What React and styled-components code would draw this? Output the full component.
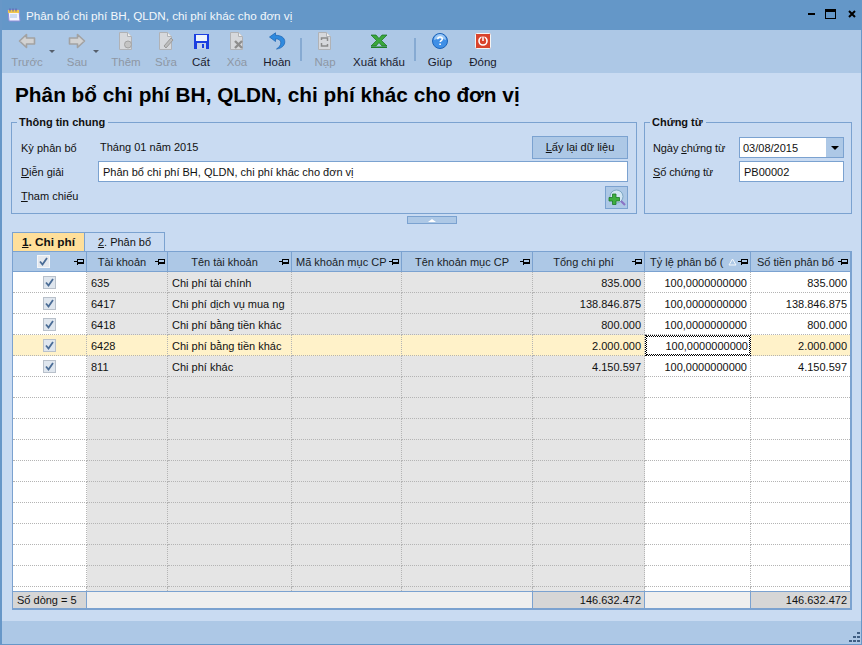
import React from 'react'
import styled, { createGlobalStyle } from 'styled-components'

const FONT = '"Liberation Sans", Arial, sans-serif'

const GlobalStyle = createGlobalStyle`
  html, body {
    margin: 0;
    padding: 0;
    background: #c9dbf2;
  }
  * { box-sizing: border-box; }
`

const PinIcon = () =>
  <PinSvg viewBox="0 0 10 9" width="10" height="9">
    <path d="M0 4.500H3M3.500 1.500V7.500M3.500 2.500H9.500V6.500H3.500M3.500 5.500H9.500" fill="none" stroke="#000" strokeWidth="1" />
  </PinSvg>

const PinSvg = styled.svg`
  flex: none;
  shape-rendering: crispEdges;
`

const BackIcon = () =>
  <svg viewBox="0 0 18 18" width="18" height="18">
    <path d="M8.500 2.500 1.500 9l7 6.500V12h8V6h-8z" fill="#d2d2d2" stroke="#a2a2a2" strokeWidth="1.600" strokeLinejoin="round" />
  </svg>

const ForwardIcon = () =>
  <svg viewBox="0 0 18 18" width="18" height="18">
    <path d="M9.500 2.500l7 6.500-7 6.500V12h-8V6h8z" fill="#d2d2d2" stroke="#a2a2a2" strokeWidth="1.600" strokeLinejoin="round" />
  </svg>

const PageIcon = ({ children }) =>
  <svg viewBox="0 0 18 18" width="18" height="18">
    <path d="M2.500 .5h8l4 4v13h-12z" fill="#d6d8dc" stroke="#b0b2b6" />
    <path d="M10.500 .5v4h4" fill="#eeeeee" stroke="#b0b2b6" />
    {children}
  </svg>

const SaveIcon = () =>
  <svg viewBox="0 0 15 15" width="15" height="15">
    <path d="M0 0h15v15H0z" fill="#1c3fe0" />
    <path d="M2 1h11v6H2z" fill="#eef4fc" />
    <path d="M3 9h9v6H3z" fill="#c4d2e8" />
    <path d="M8 10h2v4H8z" fill="#1c3fe0" />
  </svg>

const UndoIcon = () =>
  <svg viewBox="0 0 18 18" width="18" height="18">
    <path d="M7.500 .8 1.500 5l6 4.500V6.800c3.400 0 5.300 1.500 5.300 4 0 2.300-1.600 4.500-4.300 6.200 5.300-.6 8.300-3.700 8.300-7.200 0-4.200-3.800-6.500-9.300-6.500z" fill="#2f8ade" stroke="#1a62b0" strokeWidth=".7" strokeLinejoin="round" />
  </svg>

const ExcelIcon = () =>
  <svg viewBox="0 0 18 15" width="18" height="15">
    <path d="M1 1h5l3 3.500L12 1h5l-5.500 5.500L17 12h-5L9 8.500 6 12H1l5.500-5.500z" fill="#3aa83c" stroke="#17701f" strokeWidth=".7" />
    <path d="M1 12.500h16V14H1z" fill="#1d7f28" />
  </svg>

const HelpIcon = () =>
  <svg viewBox="0 0 16 16" width="16" height="16">
    <circle cx="8" cy="8" r="7.500" fill="#3f8fe6" stroke="#1c63b8" />
    <path d="M2 7a6 6 0 0 1 12 0c-3.800-1.800-8.200-1.800-12 0z" fill="#9cc8f5" />
    <path d="M5.800 6.200c0-1.400.9-2.100 2.300-2.100s2.200.7 2.200 1.900c0 1.600-2.100 1.600-2.100 3.100" fill="none" stroke="#fff" strokeWidth="1.500" />
    <path d="M7.300 10.500h1.600v1.600H7.300z" fill="#fff" />
  </svg>

const PowerIcon = () =>
  <svg viewBox="0 0 16 16" width="16" height="16">
    <rect x=".5" y=".5" width="15" height="15" rx="1" fill="#d9432c" stroke="#f4f4f4" />
    <circle cx="8" cy="8" r="4" fill="none" stroke="#fff" strokeWidth="1.600" />
    <path d="M8 3v5" stroke="#d9432c" strokeWidth="3" />
    <path d="M8 3.500v4.500" stroke="#fff" strokeWidth="1.500" />
  </svg>

const AppLogo = () =>
  <svg viewBox="0 0 16 16" width="16" height="16">
    <path d="M2 3h11l1 11H3z" fill="#f4f4ff" stroke="#8d8dd8" />
    <path d="M2 3h11v3H2z" fill="#f2c84c" />
    <path d="M4 1.500v3M7 1.500v3M10 1.500v3" stroke="#5a5aa8" />
    <path d="M4 8h7M4 10h7" stroke="#a8c4e8" />
  </svg>

const SearchAddIcon = () =>
  <svg viewBox="0 0 18 18" width="18" height="18">
    <circle cx="8.500" cy="7.500" r="6.500" fill="#d2e6f4" stroke="#7fa8c4" />
    <path d="M13 12l4 4" stroke="#8a72c4" strokeWidth="2.200" />
    <path d="M4.500 5h3.500v3.500h3.500V12H8v3.500H4.500V12H1V8.500h3.500z" fill="#3fae3f" stroke="#1c7a2a" strokeWidth=".8" />
  </svg>

const SortIcon = () =>
  <SortSvg viewBox="0 0 9 8" width="9" height="8">
    <path d="M4.500 1 8 7H1z" fill="none" stroke="#f4f8fc" />
  </SortSvg>

const SortSvg = styled.svg`
  flex: none;
  margin-right: 1px;
`

const tools = [
  { label: 'Trước', icon: <BackIcon />, width: 34, off: true, gap: 16, caret: -11 },
  { label: 'Sau', icon: <ForwardIcon />, width: 34, off: true, gap: 15, caret: -5 },
  { label: 'Thêm', icon: <PageIcon><circle cx="11" cy="12.500" r="3.500" fill="#c4c4c4" stroke="#a2a2a2" /></PageIcon>, width: 34, off: true, gap: 6 },
  { label: 'Sửa', icon: <PageIcon><path d="M7 14l7-8 2 2-7 8z" fill="#bcbcbc" stroke="#9a9a9a" /></PageIcon>, width: 34, off: true, gap: 1 },
  { label: 'Cất', icon: <SaveIcon />, width: 34, gap: 2 },
  { label: 'Xóa', icon: <PageIcon><path d="M7 9l7 7M14 9l-7 7" stroke="#8e8e8e" strokeWidth="2.400" /></PageIcon>, width: 34, off: true, gap: 6 },
  { label: 'Hoàn', icon: <UndoIcon />, width: 34, gap: 0, sep: [6, 6] },
  { label: 'Nạp', icon: <PageIcon><path d="M5.500 8V6h6v3M11.500 12v2h-6v-3" fill="none" stroke="#8a8a8a" strokeWidth="1.500" /></PageIcon>, width: 34, off: true, gap: 6 },
  { label: 'Xuất khẩu', icon: <ExcelIcon />, width: 62, gap: 0, sep: [4, 7] },
  { label: 'Giúp', icon: <HelpIcon />, width: 34, gap: 9 },
  { label: 'Đóng', icon: <PowerIcon />, width: 34, gap: 0 },
]

const Underlined = styled.span`
  text-decoration: underline;
`

const columns = [
  { key: 'check', title: '', pad: 0 },
  { key: 'account', title: 'Tài khoản', pad: 2 },
  { key: 'name', title: 'Tên tài khoản', pad: 2 },
  { key: 'itemCode', title: 'Mã khoản mục CP', pad: 4, left: true },
  { key: 'itemName', title: 'Tên khoản mục CP', pad: 2 },
  { key: 'total', title: 'Tổng chi phí', pad: 2 },
  { key: 'rate', title: 'Tỷ lệ phân bổ (', pad: 5, left: true, sorted: true },
  { key: 'amount', title: 'Số tiền phân bổ', pad: 6, left: true },
]

const rows = [
  { account: '635', name: 'Chi phí tài chính', total: '835.000', rate: '100,0000000000', amount: '835.000' },
  { account: '6417', name: 'Chi phí dịch vụ mua ng', total: '138.846.875', rate: '100,0000000000', amount: '138.846.875' },
  { account: '6418', name: 'Chi phí bằng tiền khác', total: '800.000', rate: '100,0000000000', amount: '800.000' },
  { account: '6428', name: 'Chi phí bằng tiền khác', total: '2.000.000', rate: '100,0000000000', amount: '2.000.000', active: true },
  { account: '811', name: 'Chi phí khác', total: '4.150.597', rate: '100,0000000000', amount: '4.150.597' },
  ...Array.from({ length: 10 }, () => ({ empty: true })),
]

const Tick = ({ faded }) =>
  <TickBox $faded={faded}>
    <svg viewBox="0 0 9 9" width="9" height="9">
      <path d="M1 4.500 3.500 7.500 8 1" fill="none" stroke="#4a6c96" strokeWidth="1.800" />
    </svg>
  </TickBox>

const App = () =>
  <Window>
    <GlobalStyle />
    <TitleBar>
      <AppLogo />
      <TitleText>Phân bổ chi phí BH, QLDN, chi phí khác cho đơn vị</TitleText>
      <WindowButtons>
        <MinimizeGlyph />
        <MaximizeGlyph />
        <svg viewBox="0 0 8 8" width="8" height="8">
          <path d="M1 1l6 6M7 1L1 7" stroke="#000" strokeWidth="2" />
        </svg>
      </WindowButtons>
    </TitleBar>

    <Toolbar>
      {tools.map(tool =>
        <React.Fragment key={tool.label}>
          <ToolButton $width={tool.width} $off={tool.off}>
            <ToolIcon>{tool.icon}</ToolIcon>
            <span>{tool.label}</span>
            {tool.caret && <Caret $right={tool.caret} />}
          </ToolButton>
          {tool.sep && <ToolSeparator $left={tool.sep[0]} $right={tool.sep[1]} />}
          <ToolGap $width={tool.gap} />
        </React.Fragment>
      )}
    </Toolbar>

    <Content>
      <PageTitle>Phân bổ chi phí BH, QLDN, chi phí khác cho đơn vị</PageTitle>

      <GroupRow>
        <GeneralGroup>
          <GroupLegend>Thông tin chung</GroupLegend>
          <FormGrid>
            <FieldLabel>Kỳ phân bổ</FieldLabel>
            <PeriodRow>
              <PeriodText>Tháng 01 năm 2015</PeriodText>
              <ReloadButton><Underlined>L</Underlined>ấy lại dữ liệu</ReloadButton>
            </PeriodRow>
            <FieldLabel><Underlined>D</Underlined>iễn giải</FieldLabel>
            <TextField>Phân bổ chi phí BH, QLDN, chi phí khác cho đơn vị</TextField>
            <FieldLabel><Underlined>T</Underlined>ham chiếu</FieldLabel>
            <ReferenceRow>
              <IconButton><SearchAddIcon /></IconButton>
            </ReferenceRow>
          </FormGrid>
        </GeneralGroup>

        <VoucherGroup>
          <GroupLegend>Chứng từ</GroupLegend>
          <VoucherGrid>
            <VoucherLabel>Ngày <Underlined>c</Underlined>hứng từ</VoucherLabel>
            <DateField>
              <DateValue>03/08/2015</DateValue>
              <DateArrow><ArrowDown /></DateArrow>
            </DateField>
            <VoucherLabel><Underlined>S</Underlined>ố chứng từ</VoucherLabel>
            <TextField>PB00002</TextField>
          </VoucherGrid>
        </VoucherGroup>
      </GroupRow>

      <SplitterRow>
        <SplitterButton><ArrowUp /></SplitterButton>
      </SplitterRow>

      <TabStrip>
        <Tab $active><Underlined>1</Underlined>. Chi phí</Tab>
        <Tab><Underlined>2</Underlined>. Phân bổ</Tab>
      </TabStrip>

      <Grid>
        <HeaderRow>
          {columns.map(col =>
            <HeaderCell key={col.key} $pad={col.pad}>
              <HeaderTitle $left={col.left}>
                {col.key === 'check' ? <Tick faded /> : col.title}
              </HeaderTitle>
              {col.sorted && <SortIcon />}
              <PinIcon />
            </HeaderCell>
          )}
        </HeaderRow>

        <Body>
          {rows.map((row, i) =>
            <Row key={i}>
              <CheckCell $active={row.active}>{!row.empty && <Tick />}</CheckCell>
              <Cell $locked $active={row.active}>{row.account}</Cell>
              <Cell $locked $active={row.active}>{row.name}</Cell>
              <Cell $locked $active={row.active} />
              <Cell $locked $active={row.active} />
              <Cell $locked $active={row.active} $right>{row.total}</Cell>
              {row.active
                ? <FocusCell>{row.rate}</FocusCell>
                : <Cell $right>{row.rate}</Cell>}
              <Cell $right $active={row.active}>{row.amount}</Cell>
            </Row>
          )}
          <Row $filler>
            <CheckCell $filler />
            <Cell $locked $filler />
            <Cell $locked $filler />
            <Cell $locked $filler />
            <Cell $locked $filler />
            <Cell $locked $filler />
            <Cell $filler />
            <Cell $filler />
          </Row>
        </Body>

        <FooterRow>
          <FooterCell $sum>Số dòng = 5</FooterCell>
          <FooterCell />
          <FooterCell $sum $right>146.632.472</FooterCell>
          <FooterCell />
          <FooterCell $sum $right $last>146.632.472</FooterCell>
        </FooterRow>
      </Grid>
    </Content>

    <StatusBand>
      <GripIcon viewBox="0 0 11 11" width="11" height="11">
        <path d="M8 0h3v2H8zM4 4h3v2H4zM8 4h3v2H8zM0 8h3v2H0zM4 8h3v2H4zM8 8h3v2H8z" fill="#3f5f84" />
      </GripIcon>
    </StatusBand>
  </Window>

const COLS = '74px 81px 124px 110px 131px 112px 106px 99px'

const Window = styled.div`
  width: 862px;
  height: 645px;
  display: flex;
  flex-direction: column;
  background: #c9dbf2;
  border-left: 2px solid #6797c8;
  border-right: 1px solid #6797c8;
  border-bottom: 1px solid #6797c8;
  font-family: ${FONT};
  font-size: 11px;
  color: #111;
  overflow: hidden;
`

const TitleBar = styled.div`
  height: 30px;
  flex: none;
  margin: 0 -1px 0 -2px;
  padding: 0 6px 0 6px;
  display: flex;
  align-items: center;
  background: #6497c8;
`

const TitleText = styled.div`
  padding-left: 4px;
  font-size: 11.7px;
  color: #f3f7fc;
  flex: 1;
`

const WindowButtons = styled.div`
  display: flex;
  align-items: center;
  gap: 10px;
  margin-top: -3px;
`

const MinimizeGlyph = styled.div`
  width: 7px;
  height: 2px;
  background: #000;
`

const MaximizeGlyph = styled.div`
  width: 11px;
  height: 10px;
  border: 1px solid #000;
  border-top-width: 3px;
  margin-right: 2px;
`

const Toolbar = styled.div`
  height: 43px;
  flex: none;
  padding-left: 8px;
  display: flex;
  align-items: flex-start;
  background: #adc8e6;
`

const ToolButton = styled.div`
  position: relative;
  width: ${props => props.$width}px;
  flex: none;
  display: flex;
  flex-direction: column;
  align-items: center;
  white-space: nowrap;
  font-size: 11.5px;
  color: ${props => props.$off ? '#8d97a4' : '#1a1a2c'};
`

const ToolIcon = styled.div`
  height: 22px;
  margin-bottom: 4px;
  display: flex;
  align-items: center;
  justify-content: center;
`

const ToolGap = styled.div`
  width: ${props => props.$width}px;
  flex: none;
`

const Caret = styled.div`
  position: absolute;
  right: ${props => props.$right}px;
  top: 20px;
  border-left: 3px solid transparent;
  border-right: 3px solid transparent;
  border-top: 3px solid #555f6c;
`

const ToolSeparator = styled.div`
  width: 2px;
  height: 23px;
  margin: 8px ${props => props.$right}px 0 ${props => props.$left}px;
  flex: none;
  background: #86aad2;
`

const Content = styled.div`
  flex: 1;
  display: flex;
  flex-direction: column;
  min-height: 0;
  padding: 0 9px 11px 9px;
`

const PageTitle = styled.h1`
  margin: 8px 0 0 4px;
  height: 28px;
  font-size: 20.8px;
  line-height: 28px;
  font-weight: bold;
  color: #000;
  white-space: nowrap;
`

const GroupRow = styled.div`
  display: flex;
  margin-top: 6px;
  gap: 7px;
  height: 102px;
`

const GeneralGroup = styled.fieldset`
  width: 626px;
  margin: 0;
  padding: 5px 8px 0 8px;
  border: 1px solid #7ba2d0;
  min-width: 0;
`

const VoucherGroup = styled(GeneralGroup)`
  width: 208px;
`

const GroupLegend = styled.legend`
  margin-left: -3px;
  padding: 0 3px 0 2px;
  font-weight: bold;
  font-size: 11px;
  line-height: 14px;
`

const FormGrid = styled.div`
  display: grid;
  grid-template-columns: 78px 1fr;
  grid-auto-rows: 24px;
  margin-top: 3px;
`

const VoucherGrid = styled.div`
  display: grid;
  grid-template-columns: 86px 105px;
  grid-auto-rows: 24px;
  margin-top: 3px;
`

const FieldLabel = styled.div`
  display: flex;
  align-items: center;
  white-space: pre;
  color: #111;
  padding: 1px 0 0 1px;
  height: 21px;
`

const VoucherLabel = styled(FieldLabel)`
  padding-left: 0;
  letter-spacing: -0.1px;
`

const PeriodRow = styled.div`
  display: flex;
  align-items: center;
  justify-content: space-between;
  height: 24px;
  margin-top: -2px;
`

const PeriodText = styled.div`
  color: #111;
  padding-left: 2px;
`

const ReloadButton = styled.div`
  width: 96px;
  height: 23px;
  display: flex;
  align-items: center;
  justify-content: center;
  white-space: pre;
  background: #adc8e6;
  border: 1px solid #7ba2d0;
`

const TextField = styled.div`
  height: 21px;
  padding: 0 4px;
  display: flex;
  align-items: center;
  background: #fff;
  border: 1px solid #7ba2d0;
  white-space: nowrap;
`

const ReferenceRow = styled.div`
  display: flex;
  justify-content: flex-end;
  padding-top: 1px;
`

const IconButton = styled.div`
  width: 23px;
  height: 23px;
  display: flex;
  align-items: center;
  justify-content: center;
  background: #adc8e6;
  border: 1px solid #7ba2d0;
`

const DateField = styled.div`
  height: 21px;
  display: flex;
  background: #fff;
  border: 1px solid #7ba2d0;
`

const DateValue = styled.div`
  flex: 1;
  padding-left: 3px;
  display: flex;
  align-items: center;
`

const DateArrow = styled.div`
  width: 17px;
  display: flex;
  align-items: center;
  justify-content: center;
  background: #adc8e6;
`

const ArrowDown = styled.div`
  border-left: 4px solid transparent;
  border-right: 4px solid transparent;
  border-top: 4px solid #000;
`

const SplitterRow = styled.div`
  height: 18px;
  padding: 2px 0 0 396px;
`

const SplitterButton = styled.div`
  width: 50px;
  height: 8px;
  display: flex;
  align-items: center;
  justify-content: center;
  background: #adc8e6;
  border: 1px solid #7ba2d0;
`

const ArrowUp = styled.div`
  border-left: 4px solid transparent;
  border-right: 4px solid transparent;
  border-bottom: 3px solid #fff;
`

const TabStrip = styled.div`
  display: flex;
  height: 19px;
  padding-left: 1px;
`

const Tab = styled.div`
  height: 19px;
  display: flex;
  align-items: center;
  justify-content: center;
  white-space: pre;
  width: ${props => props.$active ? '73px' : '80px'};
  font-size: ${props => props.$active ? '11.8px' : '11px'};
  font-weight: ${props => props.$active ? 'bold' : 'normal'};
  background: ${props => props.$active ? '#ffdf9a' : 'transparent'};
  border: 1px solid #7ba2d0;
  border-bottom: none;
  border-left-width: ${props => props.$active ? '1px' : '0'};
`

const Grid = styled.div`
  width: 840px;
  margin-left: 1px;
  display: flex;
  flex-direction: column;
  border-right: 2px solid #7ba2d0;
  border-left: 1px solid #7ba2d0;
  border-bottom: 2px solid #7ba2d0;
  border-top: 1px solid #7ba2d0;
`

const HeaderRow = styled.div`
  display: grid;
  grid-template-columns: ${COLS};
  height: 20px;
  background: #adc8e6;
  border-bottom: 1px solid #7ba2d0;
`

const HeaderCell = styled.div`
  display: flex;
  align-items: center;
  padding: 0 2px 0 ${props => props.$pad}px;
  border-right: 1px solid #7ba2d0;
  color: #1a1e26;
  white-space: nowrap;
  overflow: hidden;
  &:last-child { border-right: none; }
`

const HeaderTitle = styled.div`
  flex: 1;
  min-width: 0;
  display: flex;
  justify-content: ${props => props.$left ? 'flex-start' : 'center'};
`

const TickBox = styled.div`
  width: 13px;
  height: 13px;
  display: flex;
  align-items: center;
  justify-content: center;
  background: ${props => props.$faded ? '#e4e8ee' : '#dfe6ee'};
  border: 1px solid ${props => props.$faded ? '#f4f6f8' : '#b8c0ca'};
`

const Body = styled.div`
  display: flex;
  flex-direction: column;
`

const Row = styled.div`
  display: grid;
  grid-template-columns: ${COLS};
  height: ${props => props.$filler ? '4px' : '21px'};
  background: #fff;
`

const Cell = styled.div`
  display: flex;
  align-items: center;
  justify-content: ${props => props.$right ? 'flex-end' : 'flex-start'};
  padding: ${props => props.$filler ? '0' : '1px 3px 0 4px'};
  white-space: nowrap;
  overflow: hidden;
  color: #111;
  background: ${props => props.$active ? '#fff2c9' : props.$locked ? '#e5e5e5' : '#fff'};
  border-right: 1px dotted #b4b4b4;
  border-bottom: ${props => props.$filler ? 'none' : '1px dotted #b4b4b4'};
  &:last-child { border-right: none; }
`

const CheckCell = styled(Cell)`
  justify-content: center;
  padding: 1px 0 0 0;
`

const FocusCell = styled.div`
  display: flex;
  align-items: center;
  justify-content: flex-end;
  padding: 1px 2px 0;
  color: #111;
  background: #fff;
  border: 1px dotted #000;
  outline: 1px dotted #000;
  outline-offset: -2px;
`

const FooterRow = styled.div`
  display: grid;
  grid-template-columns: 74px 446px 112px 106px 99px;
  height: 16px;
  box-sizing: content-box;
  border-top: 1px solid #7ba2d0;
  background: #efefef;
`

const FooterCell = styled.div`
  display: flex;
  align-items: center;
  justify-content: ${props => props.$right ? 'flex-end' : 'flex-start'};
  padding: ${props => props.$right ? '0 3px 0 0' : '0 0 0 4px'};
  background: ${props => props.$sum ? '#d6d6d6' : '#efefef'};
  border-right: ${props => props.$last ? 'none' : '1px solid #7ba2d0'};
  color: #111;
`

const StatusBand = styled.div`
  position: relative;
  height: 23px;
  flex: none;
  background: #adc8e6;
`

const GripIcon = styled.svg`
  position: absolute;
  right: 1px;
  bottom: 1px;
`

export default App
